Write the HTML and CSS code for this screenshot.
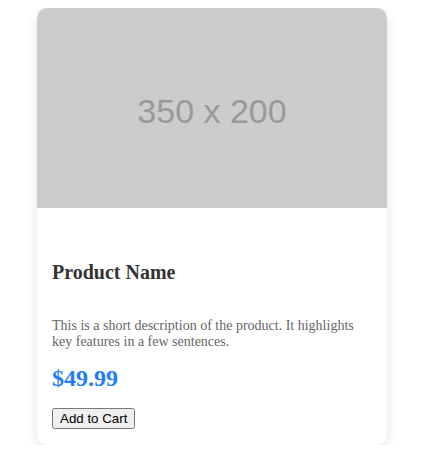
FILE: index.html
```html
<!DOCTYPE html>
<html>
<head>
<meta charset="utf-8">
<link rel="stylesheet" href="styles.css">
</head>
<body>
<div class="card">
  <div class="card-image">350 x 200</div>
  <div class="card-body">
    <h3 class="title">Product Name</h3>
    <p class="desc">This is a short description of the product. It highlights key features in a few sentences.</p>
    <div class="price">$49.99</div>
    <button class="btn">Add to Cart</button>
  </div>
</div>
</body>
</html>
```
FILE: styles.css
```css
body {
  margin: 8px 0;
  font-family: "Liberation Serif", "Times New Roman", serif;
  background: #fff;
}
.card {
  width: 350px;
  margin-left: 37px;
  border-radius: 10px;
  overflow: hidden;
  box-shadow: 0 4px 12px rgba(0, 0, 0, 0.1);
  background: #fff;
}
.card-image {
  box-sizing: border-box;
  height: 200px;
  padding-top: 6px;
  background: #ccc;
  color: #999;
  font-family: "Liberation Sans", Arial, sans-serif;
  font-size: 34px;
  display: flex;
  align-items: center;
  justify-content: center;
}
.card-body {
  padding: 15px 15px 16px;
  display: flex;
  flex-direction: column;
  align-items: flex-start;
}
.title {
  font-size: 20px;
  color: #333;
  margin: 38px 0 34px;
}
.desc {
  font-size: 14px;
  color: #666;
  margin: 0;
}
.price {
  font-size: 24px;
  font-weight: bold;
  color: #1e80f0;
  margin: 15px 0 16px;
}
.btn {
  font-family: "Liberation Sans", Arial, sans-serif;
  font-size: 13.33px;
}
```
